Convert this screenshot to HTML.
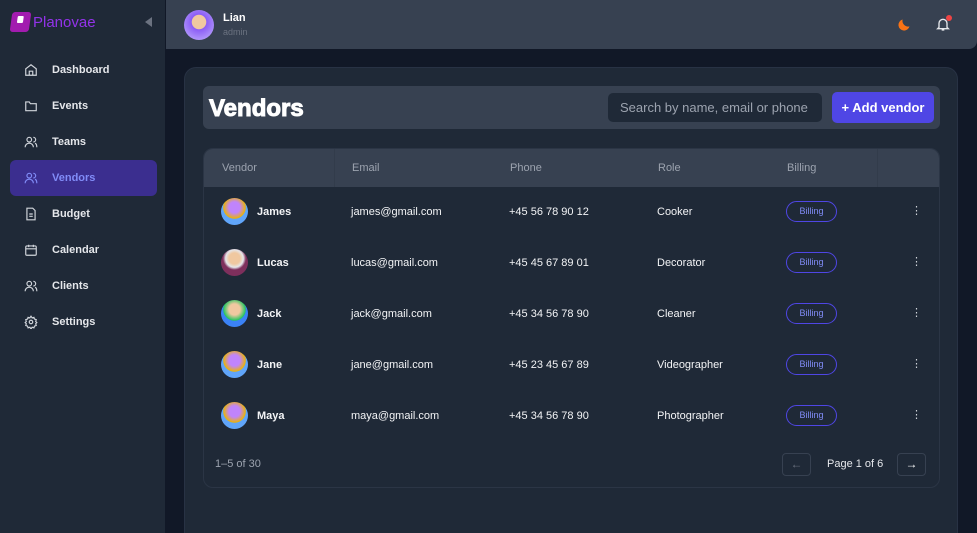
<!DOCTYPE html>
<html><head><style>
*{box-sizing:border-box;margin:0;padding:0}
html,body{width:977px;height:533px;overflow:hidden}
body{background:#111827;font-family:"Liberation Sans",sans-serif;color:#e5e7eb;position:relative}
.side{position:absolute;left:0;top:0;width:166px;height:533px;background:#1f2937;border-right:1px solid #111827}
.logo{position:absolute;left:11px;top:12px;display:flex;align-items:center;gap:3px;color:#9333ea;font-size:15px}
.logo .m{width:19px;height:20px;background:#a21caf;border-radius:3px;transform:skewX(-8deg);position:relative}
.logo .m:after{content:"";position:absolute;left:6px;top:4px;width:6px;height:7px;background:#fff;border-radius:1px}
.col{position:absolute;left:145px;top:17px;width:0;height:0;border-top:5px solid transparent;border-bottom:5px solid transparent;border-right:7px solid #6b7280}
.nav{position:absolute;left:10px;width:147px;height:36px;display:flex;align-items:center;font-size:11px;font-weight:bold;color:#e5e7eb;border-radius:6px}
.nav svg{position:absolute;left:14px}
.nav span{position:absolute;left:42px}
.nav.act{background:#3b2e8f;color:#818cf8}
.top{position:absolute;left:166px;top:0;width:811px;height:49px;background:#374151;border-bottom-right-radius:8px}
.av{border-radius:50%;position:absolute;overflow:hidden}
.main{position:absolute;left:184px;top:67px;width:774px;height:466px;background:#1f2937;border-radius:12px 12px 0 0;border:1px solid #283244;border-bottom:none}
.tb{position:absolute;left:18px;top:18px;width:737px;height:43px;background:#374151;border-radius:6px}
.tb h1{position:absolute;left:6px;top:9px;font-size:24px;font-weight:900;color:#fff;-webkit-text-stroke:1px #fff}
.search{position:absolute;left:405px;top:7px;width:214px;height:29px;background:#1f2937;border-radius:5px;color:#9ca3af;font-size:13px;padding:7px 12px}
.add{position:absolute;left:629px;top:6px;width:102px;height:31px;background:#4f46e5;border-radius:5px;color:#fff;font-size:13px;font-weight:bold;padding:8px 0;text-align:center}
.tbl{position:absolute;left:18px;top:80px;width:737px;height:340px;border:1px solid #2b3545;border-radius:10px;overflow:hidden}
.th{position:absolute;left:0;top:0;width:737px;height:38px;background:#374151;font-size:11px;color:#9ca3af}
.th div,.row div{position:absolute}
.row{position:absolute;left:0;width:737px;height:51px;font-size:11px;color:#f3f4f6}
.bill{border:1px solid #4f46e5;border-radius:12px;width:51px;height:21px;font-size:9px;color:#818cf8;text-align:center;line-height:19px}
.pb{position:absolute;width:29px;height:23px;border:1px solid #374151;border-radius:4px;text-align:center;font-size:12px;line-height:21px}
</style></head><body>
<div class="side">
 <div class="logo"><div class="m"></div><span>Planovae</span></div>
 <div class="col"></div>
 <div class="nav" style="top:52px"><svg width="14" height="14" viewBox="0 0 24 24" fill="none" stroke="#d1d5db" stroke-width="2"><path d="M3 10l9-7 9 7v11H3z M9 21v-7h6v7"/></svg><span>Dashboard</span></div>
 <div class="nav" style="top:88px"><svg width="14" height="14" viewBox="0 0 24 24" fill="none" stroke="#d1d5db" stroke-width="2"><path d="M3 5h6l2 3h10v12H3z"/></svg><span>Events</span></div>
 <div class="nav" style="top:124px"><svg width="14" height="14" viewBox="0 0 24 24" fill="none" stroke="#d1d5db" stroke-width="2"><circle cx="9" cy="8" r="4"/><path d="M2 21c0-4 3-7 7-7s7 3 7 7M16 4a4 4 0 010 8M19 14c2 1 3 4 3 7"/></svg><span>Teams</span></div>
 <div class="nav act" style="top:160px"><svg width="14" height="14" viewBox="0 0 24 24" fill="none" stroke="#818cf8" stroke-width="2"><circle cx="9" cy="8" r="4"/><path d="M2 21c0-4 3-7 7-7s7 3 7 7M16 4a4 4 0 010 8M19 14c2 1 3 4 3 7"/></svg><span>Vendors</span></div>
 <div class="nav" style="top:196px"><svg width="14" height="14" viewBox="0 0 24 24" fill="none" stroke="#d1d5db" stroke-width="2"><path d="M5 2h10l4 4v16H5z M9 12h6M9 16h6"/></svg><span>Budget</span></div>
 <div class="nav" style="top:232px"><svg width="14" height="14" viewBox="0 0 24 24" fill="none" stroke="#d1d5db" stroke-width="2"><rect x="3" y="5" width="18" height="16" rx="2"/><path d="M3 10h18M8 3v4M16 3v4"/></svg><span>Calendar</span></div>
 <div class="nav" style="top:268px"><svg width="14" height="14" viewBox="0 0 24 24" fill="none" stroke="#d1d5db" stroke-width="2"><circle cx="9" cy="8" r="4"/><path d="M2 21c0-4 3-7 7-7s7 3 7 7M16 4a4 4 0 010 8M19 14c2 1 3 4 3 7"/></svg><span>Clients</span></div>
 <div class="nav" style="top:304px"><svg width="14" height="14" viewBox="0 0 24 24" fill="none" stroke="#d1d5db" stroke-width="2"><circle cx="12" cy="12" r="3"/><path d="M12 2l2 3 3-1 1 3 3 1-1 3 2 2-2 2 1 3-3 1-1 3-3-1-2 3-2-3-3 1-1-3-3-1 1-3-2-2 2-2-1-3 3-1 1-3 3 1z"/></svg><span>Settings</span></div>
</div>
<div class="top">
 <div class="av" style="left:18px;top:10px;width:30px;height:30px;background:radial-gradient(circle at 50% 40%,#f0c8a0 0 30%,#8b5cf6 32%,#c4b5fd 100%)"></div>
 <div style="position:absolute;left:57px;top:12px;font-size:11px;font-weight:bold;color:#fff">Lian</div>
 <div style="position:absolute;left:57px;top:27px;font-size:9px;color:#6b7280">admin</div>
 <svg style="position:absolute;left:731px;top:17px" width="15" height="15" viewBox="0 0 24 24"><path d="M20 15A9 9 0 019 4a9 9 0 1011 11z" fill="#f97316"/></svg>
 <svg style="position:absolute;left:769px;top:16px" width="16" height="16" viewBox="0 0 24 24" fill="none" stroke="#e5e7eb" stroke-width="2"><path d="M6 17V11a6 6 0 0112 0v6l2 2H4zM10 21h4"/></svg>
 <div style="position:absolute;left:780px;top:15px;width:6px;height:6px;border-radius:50%;background:#ef4444"></div>
</div>
<div class="main">
 <div class="tb"><h1>Vendors</h1><div class="search">Search by name, email or phone</div><div class="add">+ Add vendor</div></div>
 <div class="tbl">
  <div class="th"><div style="left:18px;top:13px">Vendor</div><div style="left:130px;top:0;width:1px;height:38px;background:#323c4b"></div><div style="left:148px;top:13px">Email</div><div style="left:306px;top:13px">Phone</div><div style="left:454px;top:13px">Role</div><div style="left:583px;top:13px">Billing</div><div style="left:673px;top:0;width:1px;height:38px;background:#323c4b"></div></div>
 </div>
 <div style="position:absolute;left:30px;top:390px;font-size:11px;color:#9ca3af">1–5 of 30</div>
 <div class="pb" style="left:597px;top:385px;color:#6b7280">←</div>
 <div style="position:absolute;left:642px;top:390px;font-size:11px;color:#e5e7eb">Page 1 of 6</div>
 <div class="pb" style="left:712px;top:385px;color:#fff">→</div>
</div>
<div style="position:absolute;left:203px;top:186px">
 <div class="row" style="top:0"><div class="av" style="left:18px;top:12px;width:27px;height:27px;background:radial-gradient(circle at 50% 35%,#c084fc 0 25%,#eab308 50%,#60a5fa 52%)"></div><div style="left:54px;top:20px;font-weight:bold">James</div><div style="left:148px;top:20px">james@gmail.com</div><div style="left:306px;top:20px">+45 56 78 90 12</div><div style="left:454px;top:20px">Cooker</div><div class="bill" style="left:583px;top:15px">Billing</div><div style="left:708px;top:18px;color:#d1d5db">⋮</div></div>
 <div class="row" style="top:51px"><div class="av" style="left:18px;top:12px;width:27px;height:27px;background:radial-gradient(circle at 50% 35%,#f0c8a0 0 25%,#e5e7eb 40%,#7e2f5c 52%)"></div><div style="left:54px;top:20px;font-weight:bold">Lucas</div><div style="left:148px;top:20px">lucas@gmail.com</div><div style="left:306px;top:20px">+45 45 67 89 01</div><div style="left:454px;top:20px">Decorator</div><div class="bill" style="left:583px;top:15px">Billing</div><div style="left:708px;top:18px;color:#d1d5db">⋮</div></div>
 <div class="row" style="top:102px"><div class="av" style="left:18px;top:12px;width:27px;height:27px;background:radial-gradient(circle at 50% 35%,#f0c8a0 0 25%,#22c55e 50%,#3b82f6 52%)"></div><div style="left:54px;top:20px;font-weight:bold">Jack</div><div style="left:148px;top:20px">jack@gmail.com</div><div style="left:306px;top:20px">+45 34 56 78 90</div><div style="left:454px;top:20px">Cleaner</div><div class="bill" style="left:583px;top:15px">Billing</div><div style="left:708px;top:18px;color:#d1d5db">⋮</div></div>
 <div class="row" style="top:153px"><div class="av" style="left:18px;top:12px;width:27px;height:27px;background:radial-gradient(circle at 50% 35%,#c084fc 0 25%,#eab308 50%,#60a5fa 52%)"></div><div style="left:54px;top:20px;font-weight:bold">Jane</div><div style="left:148px;top:20px">jane@gmail.com</div><div style="left:306px;top:20px">+45 23 45 67 89</div><div style="left:454px;top:20px">Videographer</div><div class="bill" style="left:583px;top:15px">Billing</div><div style="left:708px;top:18px;color:#d1d5db">⋮</div></div>
 <div class="row" style="top:204px"><div class="av" style="left:18px;top:12px;width:27px;height:27px;background:radial-gradient(circle at 50% 35%,#c084fc 0 25%,#eab308 50%,#60a5fa 52%)"></div><div style="left:54px;top:20px;font-weight:bold">Maya</div><div style="left:148px;top:20px">maya@gmail.com</div><div style="left:306px;top:20px">+45 34 56 78 90</div><div style="left:454px;top:20px">Photographer</div><div class="bill" style="left:583px;top:15px">Billing</div><div style="left:708px;top:18px;color:#d1d5db">⋮</div></div>
</div>
</body></html>
